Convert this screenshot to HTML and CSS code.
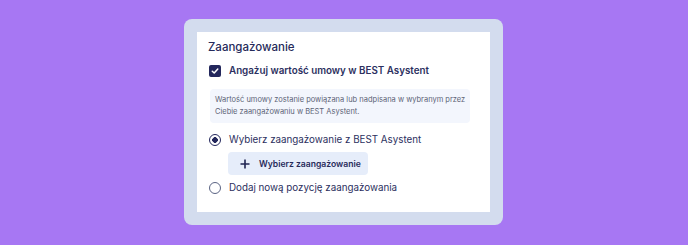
FILE: index.html
```html
<!DOCTYPE html>
<html lang="pl">
<head>
    <meta charset="UTF-8">
    <meta name="viewport" content="width=device-width, initial-scale=1.0">
    <title>Zaangażowanie</title>
    <link rel="stylesheet" href="styles.css">
</head>
<body>
    <div class="frame">
        <div class="panel">
            <h2 class="panel-title">Zaangażowanie</h2>

            <label class="check-row">
                <span class="checkbox">
                    <svg width="8" height="8" viewBox="0 0 8 8"><path d="M1.3 4.2 L3.2 6 L6.8 2" fill="none" stroke="#fff" stroke-width="1.5" stroke-linecap="round" stroke-linejoin="round"/></svg>
                </span>
                <span class="check-label">Angażuj wartość umowy w BEST Asystent</span>
            </label>

            <div class="info-box">
                Wartość umowy zostanie powiązana lub nadpisana w wybranym przez<br>
                Ciebie zaangażowaniu w BEST Asystent.
            </div>

            <label class="radio-row">
                <span class="radio checked"></span>
                <span class="radio-label">Wybierz zaangażowanie z BEST Asystent</span>
            </label>

            <button class="pick-button" type="button">
                <svg width="10" height="10" viewBox="0 0 10 10"><path d="M5 0.5 V9.5 M0.5 5 H9.5" stroke="#1f2352" stroke-width="1.6"/></svg>
                Wybierz zaangażowanie
            </button>

            <label class="radio-row">
                <span class="radio"></span>
                <span class="radio-label">Dodaj nową pozycję zaangażowania</span>
            </label>
        </div>
    </div>
</body>
</html>
```

FILE: styles.css
```css
* {
    margin: 0;
    padding: 0;
    box-sizing: border-box;
}

body {
    font-family: Inter, 'Noto Sans', sans-serif;
    background-color: #a777f3;
    width: 688px;
    height: 245px;
    padding: 19px 0 0 184px;
}

.frame {
    width: 319px;
    height: 206px;
    background: #d3dcee;
    border-radius: 8px;
    padding: 13px;
}

.panel {
    background: #fff;
    height: 180px;
    padding: 8px 11px 0 11px;
    display: flex;
    flex-direction: column;
    align-items: flex-start;
}

.panel-title {
    font-size: 11.5px;
    font-weight: 500;
    color: #262a5a;
    line-height: 14px;
    margin-bottom: 11px;
}

.check-row,
.radio-row {
    display: flex;
    align-items: center;
    gap: 8px;
    padding-left: 1px;
}

.checkbox {
    width: 12px;
    height: 12px;
    border-radius: 2px;
    background: #23275c;
    display: flex;
    align-items: center;
    justify-content: center;
}

.check-label {
    font-size: 9.8px;
    font-weight: 600;
    color: #2c3060;
    line-height: 12px;
}

.info-box {
    margin: 12px 0 0 2px;
    width: 260px;
    background: #f3f6fd;
    border-radius: 4px;
    padding: 5px 2px 5px 5px;
    font-size: 7.5px;
    white-space: nowrap;
    line-height: 12px;
    color: #5d6477;
}

.radio-row {
    margin-top: 11px;
}

.radio {
    width: 12px;
    height: 12px;
    border-radius: 50%;
    border: 1.5px solid #5a6383;
}

.radio.checked {
    border: 1.8px solid #23275c;
    background: radial-gradient(circle, #23275c 0 2.6px, #fff 3px);
}

.radio-label {
    font-size: 9.8px;
    color: #2c3060;
    line-height: 12px;
}

.pick-button {
    margin: 6px 0 0 20px;
    height: 23px;
    width: 140px;
    border: none;
    border-radius: 4px;
    background: #e6edfa;
    font-family: inherit;
    font-size: 8.6px;
    font-weight: 600;
    color: #262a5a;
    white-space: nowrap;
    display: flex;
    align-items: center;
    gap: 9px;
    padding-left: 12px;
}

.pick-button + .radio-row {
    margin-top: 7px;
}
```
